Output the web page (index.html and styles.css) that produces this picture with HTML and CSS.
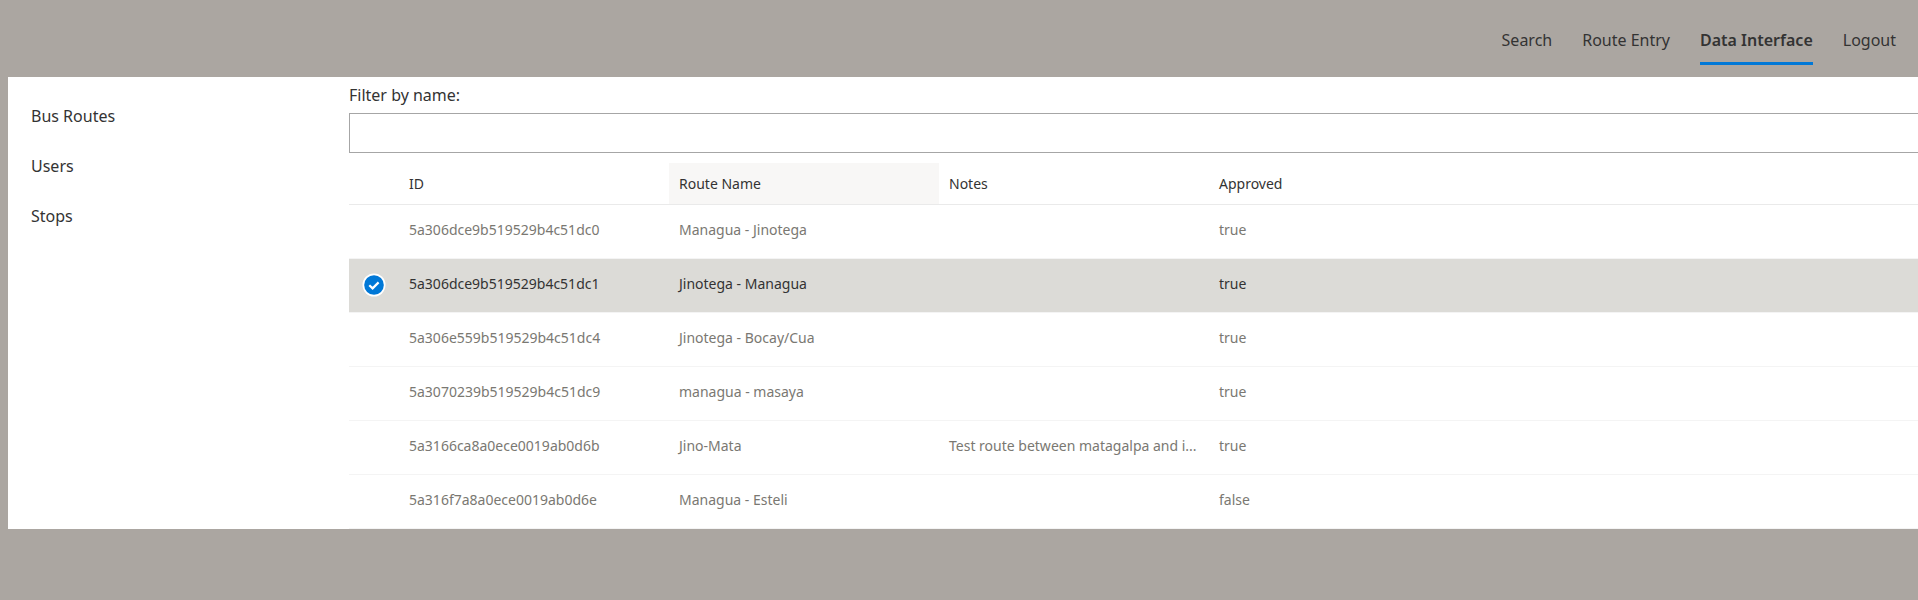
FILE: index.html
```
<!DOCTYPE html>
<html lang="en">
<head>
  <meta charset="utf-8">
  <meta name="viewport" content="width=device-width, initial-scale=1">
  <title>Data Interface</title>
  <link rel="stylesheet" href="styles.css">
</head>
<body>
  <header class="topbar">
    <nav class="topnav" aria-label="Main">
      <a class="topnav-link" href="#search">Search</a>
      <a class="topnav-link" href="#route-entry">Route Entry</a>
      <a class="topnav-link topnav-link--active" href="#data" aria-current="page">Data Interface</a>
      <a class="topnav-link" href="#logout">Logout</a>
    </nav>
  </header>
  <div class="page">
    <nav class="sidebar" aria-label="Data types">
      <a class="sidebar-link" href="#bus-routes">Bus Routes</a>
      <a class="sidebar-link" href="#users">Users</a>
      <a class="sidebar-link" href="#stops">Stops</a>
    </nav>
    <main class="content">
      <label class="filter-label" for="filter">Filter by name:</label>
      <input class="filter-input" id="filter" type="text">
      <table class="routes">
        <colgroup>
          <col class="col-check">
          <col class="col-data">
          <col class="col-data">
          <col class="col-data">
          <col>
        </colgroup>
        <thead>
          <tr>
            <td></td>
            <th scope="col">ID</th>
            <th scope="col" class="is-hovered">Route Name</th>
            <th scope="col">Notes</th>
            <th scope="col">Approved</th>
          </tr>
        </thead>
        <tbody>
          <tr>
            <td></td>
            <td>5a306dce9b519529b4c51dc0</td>
            <td>Managua - Jinotega</td>
            <td></td>
            <td>true</td>
          </tr>
          <tr class="is-selected">
            <td class="check-cell">
              <label class="check">
                <input class="check-input" type="checkbox" checked aria-label="Select Jinotega - Managua">
                <svg class="check-icon" viewBox="0 0 24 24" aria-hidden="true">
                  <circle cx="12" cy="12" r="11.5" fill="#fff"/>
                  <circle cx="12" cy="12" r="9.8" fill="#0078d7"/>
                  <path d="M7.3 12.2l3.3 3.2 6-6" fill="none" stroke="#fff" stroke-width="2.2"/>
                </svg>
              </label>
            </td>
            <td>5a306dce9b519529b4c51dc1</td>
            <td>Jinotega - Managua</td>
            <td></td>
            <td>true</td>
          </tr>
          <tr>
            <td></td>
            <td>5a306e559b519529b4c51dc4</td>
            <td>Jinotega - Bocay/Cua</td>
            <td></td>
            <td>true</td>
          </tr>
          <tr>
            <td></td>
            <td>5a3070239b519529b4c51dc9</td>
            <td>managua - masaya</td>
            <td></td>
            <td>true</td>
          </tr>
          <tr>
            <td></td>
            <td>5a3166ca8a0ece0019ab0d6b</td>
            <td>Jino-Mata</td>
            <td>Test route between matagalpa and i...</td>
            <td>true</td>
          </tr>
          <tr>
            <td></td>
            <td>5a316f7a8a0ece0019ab0d6e</td>
            <td>Managua - Esteli</td>
            <td></td>
            <td>false</td>
          </tr>
        </tbody>
      </table>
    </main>
  </div>
</body>
</html>
```
FILE: styles.css
```
* {
  box-sizing: border-box;
}

body {
  margin: 0;
  padding-left: 8px;
  overflow-x: hidden;
  background: #aba6a1;
  color: #333;
  font-family: "Segoe UI", "Noto Sans", "Open Sans", sans-serif;
  font-size: 16px;
  line-height: 20px;
}

a {
  color: inherit;
  text-decoration: none;
}

.topbar {
  display: flex;
  justify-content: flex-end;
  padding: 15px 22px 12px 0;
}

.topnav {
  display: flex;
  gap: 30px;
}

.topnav-link {
  padding: 15px 0 12px;
  border-bottom: 3px solid transparent;
}

.topnav-link--active {
  border-bottom-color: #0078d7;
  font-weight: 600;
}

.page {
  display: flex;
  background: #fff;
}

.sidebar {
  flex: 0 0 341px;
  padding: 14px 0 0 23px;
}

.sidebar-link {
  display: block;
  padding: 15px 0;
}

.content {
  flex: 1;
  min-width: 0;
}

.filter-label {
  display: block;
  padding: 8px 0;
}

.filter-input {
  display: block;
  width: calc(100% + 8px);
  height: 40px;
  margin-bottom: 10px;
  padding: 0 15px;
  border: 1px solid #a6a6a6;
  background: #fff;
  color: inherit;
  font: inherit;
}

.routes {
  width: 100%;
  table-layout: fixed;
  border-collapse: separate;
  border-spacing: 0;
  font-size: 14px;
}

.col-check {
  width: 50px;
}

.col-data {
  width: 270px;
}

.routes th,
.routes thead td {
  height: 42px;
  padding: 0 10px;
  border-bottom: 1px solid #eaeaea;
  font-weight: 400;
  text-align: left;
}

.routes th.is-hovered {
  background: #f8f7f6;
}

.routes tbody td {
  height: 54px;
  padding: 0 10px 4px;
  border-bottom: 1px solid #f4f4f4;
  color: #7a7872;
  overflow: hidden;
  text-overflow: ellipsis;
  white-space: nowrap;
}

.routes .is-selected td {
  background: #dcdbd7;
  color: #333;
}

.routes tbody .check-cell {
  padding: 0 0 2px;
}

.check {
  display: grid;
  justify-content: center;
}

.check-input,
.check-icon {
  grid-area: 1 / 1;
  width: 24px;
  height: 24px;
  margin: 0;
}

.check-input {
  opacity: 0;
}
```
